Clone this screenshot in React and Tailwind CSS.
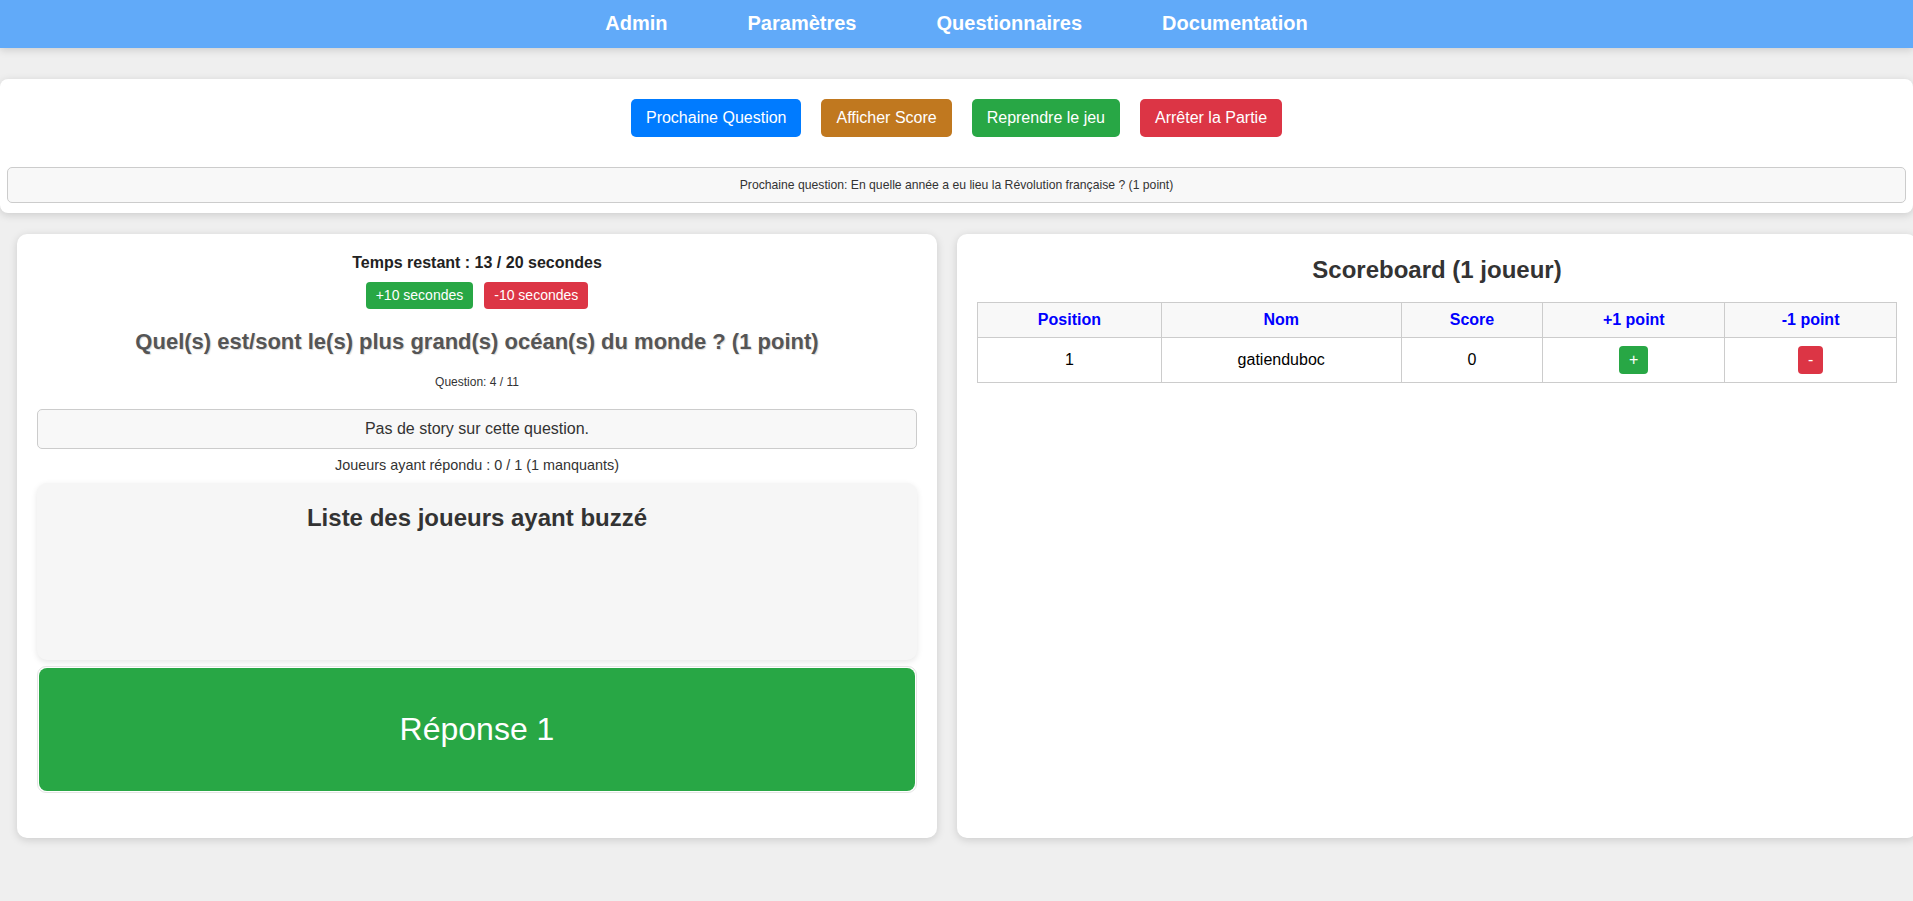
const controls = [
  { label: "Prochaine Question", color: "bg-[#007bff]" },
  { label: "Afficher Score", color: "bg-[#c0781f]" },
  { label: "Reprendre le jeu", color: "bg-[#28a745]" },
  { label: "Arrêter la Partie", color: "bg-[#dc3545]" },
];

const players = [{ position: 1, name: "gatienduboc", score: 0 }];

export default function App() {
  return (
    <div className="min-h-screen w-full overflow-hidden bg-[#efefef] font-['Liberation_Sans',Arial,sans-serif]">
      <nav className="h-12 bg-[#61aaf9] flex items-center justify-center gap-20 shadow-[0_2px_8px_rgba(0,0,0,0.15)]">
        {["Admin", "Paramètres", "Questionnaires", "Documentation"].map((item) => (
          <a key={item} className="text-white font-bold text-[20px] leading-[23px] -mt-px">
            {item}
          </a>
        ))}
      </nav>

      <div className="mt-[31px] bg-white rounded-[8px] shadow-[0_2px_8px_rgba(0,0,0,0.15)] px-[7px] pt-5 pb-[10px]">
        <div className="flex justify-center gap-5">
          {controls.map((c) => (
            <button
              key={c.label}
              className={`${c.color} text-white text-[16px] leading-[18px] px-[15px] py-[10px] rounded-[5px]`}
            >
              {c.label}
            </button>
          ))}
        </div>
        <div className="mt-[30px] bg-[#f8f8f8] border border-[#ccc] rounded-[5px] py-[10px] text-center text-[12.2px] leading-[14px] text-[#333]">
          Prochaine question: En quelle année a eu lieu la Révolution française ? (1 point)
        </div>
      </div>

      <div className="mt-[21px] flex gap-5 pl-[17px]">
        {/* game panel */}
        <div className="w-[920px] h-[604px] shrink-0 bg-white rounded-[10px] shadow-[0_2px_8px_rgba(0,0,0,0.15)] px-5 pt-5 text-center">
          <p className="font-bold text-[16px] leading-[18px] text-[#222]">
            Temps restant : 13 / 20 secondes
          </p>
          <div className="mt-[10px] flex justify-center gap-[11px]">
            <button className="bg-[#28a745] text-white text-[14px] leading-[17px] px-[10px] py-[5px] rounded-[4px]">
              +10 secondes
            </button>
            <button className="bg-[#dc3545] text-white text-[14px] leading-[17px] px-[10px] py-[5px] rounded-[4px]">
              -10 secondes
            </button>
          </div>
          <h2 className="mt-[20px] font-bold text-[22px] leading-[25px] text-[#555] [text-shadow:1px_1px_1px_rgba(0,0,0,0.15)]">
            Quel(s) est/sont le(s) plus grand(s) océan(s) du monde ? (1 point)
          </h2>
          <p className="mt-[21px] text-[12px] leading-[14px] text-[#333]">Question: 4 / 11</p>
          <div className="mt-5 bg-[#f8f8f8] border border-[#ccc] rounded-[5px] py-[10px] text-[16px] leading-[18px] text-[#333]">
            Pas de story sur cette question.
          </div>
          <p className="mt-2 text-[14.4px] leading-[16px] text-[#333]">
            Joueurs ayant répondu : 0 / 1 (1 manquants)
          </p>
          <div className="mt-[10px] h-[177px] bg-[#f6f6f6] rounded-[10px] shadow-[0_2px_6px_rgba(0,0,0,0.1)] pt-[21px]">
            <h3 className="font-bold text-[24px] leading-[28px] text-[#333]">
              Liste des joueurs ayant buzzé
            </h3>
          </div>
          <div className="mt-[6px] border border-[#e5e5e5] rounded-[9px] p-px">
            <button className="w-full h-[123px] bg-[#28a745] rounded-[8px] text-white text-[32px] leading-[37px]">
              Réponse 1
            </button>
          </div>
        </div>

        {/* scoreboard */}
        <div className="w-[960px] h-[604px] shrink-0 bg-white rounded-[10px] shadow-[0_2px_8px_rgba(0,0,0,0.15)] px-5 pt-[22px]">
          <h2 className="text-center font-bold text-[24px] leading-[28px] text-[#333]">
            Scoreboard (1 joueur)
          </h2>
          <table className="mt-[18px] w-[920px] border-collapse text-[16px] text-center">
            <thead className="bg-[#f8f8f8]">
              <tr>
                <th className="w-[184px] border border-[#ccc] py-2 leading-[18px] font-bold text-[#0000ff]">Position</th>
                <th className="w-[240px] border border-[#ccc] py-2 leading-[18px] font-bold text-[#0000ff]">Nom</th>
                <th className="w-[142px] border border-[#ccc] py-2 leading-[18px] font-bold text-[#0000ff]">Score</th>
                <th className="w-[182px] border border-[#ccc] py-2 leading-[18px] font-bold text-[#0000ff]">+1 point</th>
                <th className="w-[172px] border border-[#ccc] py-2 leading-[18px] font-bold text-[#0000ff]">-1 point</th>
              </tr>
            </thead>
            <tbody>
              {players.map((p) => (
                <tr key={p.name}>
                  <td className="border border-[#ccc] py-2 text-black">{p.position}</td>
                  <td className="border border-[#ccc] py-2 text-black">{p.name}</td>
                  <td className="border border-[#ccc] py-2 text-black">{p.score}</td>
                  <td className="border border-[#ccc] py-2">
                    <button className="bg-[#28a745] text-white text-[16px] leading-[18px] px-[10px] py-[5px] rounded-[4px]">
                      +
                    </button>
                  </td>
                  <td className="border border-[#ccc] py-2">
                    <button className="bg-[#dc3545] text-white text-[16px] leading-[18px] px-[10px] py-[5px] rounded-[4px]">
                      -
                    </button>
                  </td>
                </tr>
              ))}
            </tbody>
          </table>
        </div>
      </div>
    </div>
  );
}
